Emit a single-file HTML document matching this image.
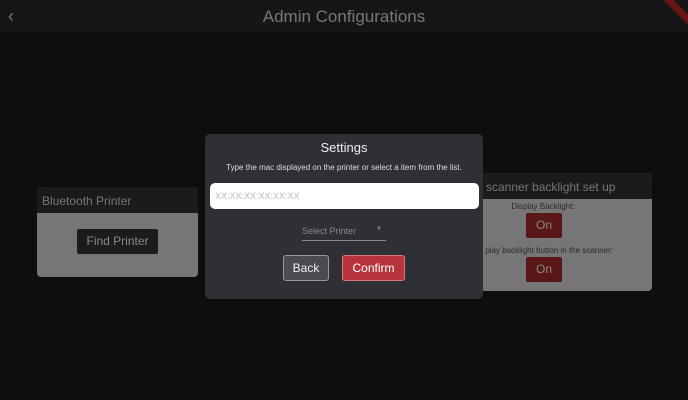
<!DOCTYPE html>
<html><head><style>
*{margin:0;padding:0;box-sizing:border-box}
body{width:688px;height:400px;background:#0e0e0e;font-family:"Liberation Sans","DejaVu Sans",sans-serif;position:relative;overflow:hidden}
.a{position:absolute}
</style></head><body>
<div class="a" style="left:0;top:0;width:688px;height:32px;background:#161617"></div>
<div class="a" style="left:8px;top:6px;color:#777;font-size:18px">&#8249;</div>
<div class="a" style="left:0;width:688px;top:7px;text-align:center;color:#777;font-size:17px">Admin Configurations</div>
<div class="a" style="left:655px;top:8px;width:50px;height:7px;background:#6a1515;transform:rotate(45deg);"></div>

<div class="a" style="left:37px;top:187px;width:161px;height:90px;background:#767676;border-radius:4px;overflow:hidden">
<div style="height:26px;background:#1b1b1c;color:#777;font-size:12px;padding:7px 5px">Bluetooth Printer</div>
<div class="a" style="left:40px;top:42px;width:81px;height:25px;background:#1c1c1c;border-radius:2px;color:#888;font-size:12px;text-align:center;line-height:25px">Find Printer</div>
</div>

<div class="a" style="left:478px;top:173px;width:174px;height:118px;background:#767676;border-radius:4px;overflow:hidden">
<div style="height:26px;background:#1b1b1c;color:#777;font-size:12px;padding:7px 8px">scanner backlight set up</div>
<div class="a" style="left:0;width:130px;top:29px;text-align:center;color:#2a2a2a;font-size:8px">Display Backlight:</div>
<div class="a" style="left:48px;top:40px;width:36px;height:25px;background:#5a1718;border-radius:2px;color:#888;font-size:12px;text-align:center;line-height:25px">On</div>
<div class="a" style="left:0;top:73px;width:135px;text-align:right;color:#2a2a2a;font-size:8px;white-space:nowrap">play backlight button in the scanner:</div>
<div class="a" style="left:48px;top:84px;width:36px;height:25px;background:#5a1718;border-radius:2px;color:#888;font-size:12px;text-align:center;line-height:25px">On</div>
</div>

<div class="a" style="left:205px;top:134px;width:278px;height:165px;background:#2f3036;border-radius:5px">
<div class="a" style="left:0;width:278px;top:6px;text-align:center;color:#eee;font-size:13px">Settings</div>
<div class="a" style="left:0;width:278px;top:29px;text-align:center;color:#ddd;font-size:8px">Type the mac displayed on the printer or select a item from the list.</div>
<div class="a" style="left:5px;top:49px;width:269px;height:26px;background:#fff;border-radius:5px;color:#bbb;font-size:9px;padding:8px 5px">XX:XX:XX:XX:XX:XX</div>
<div class="a" style="left:97px;top:92px;width:84px;height:15px;border-bottom:1px solid #888;color:#888;font-size:9px">Select Printer<span style="position:absolute;right:4px;top:0;font-size:6px">&#9660;</span></div>
<div class="a" style="left:78px;top:121px;width:46px;height:26px;background:#4a4b51;border:1px solid #999;border-radius:3px;color:#eee;font-size:12px;text-align:center;line-height:24px">Back</div>
<div class="a" style="left:137px;top:121px;width:63px;height:26px;background:#b8343c;border:1px solid #d77;border-radius:3px;color:#fff;font-size:12px;text-align:center;line-height:24px">Confirm</div>
</div>
</body></html>
